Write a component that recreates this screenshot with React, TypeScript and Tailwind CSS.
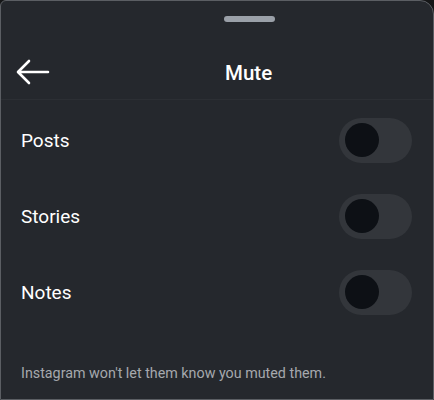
import React from "react";

const rows = ["Posts", "Stories", "Notes"];

function Toggle() {
  return (
    <div className="flex h-[45px] w-[73px] items-center rounded-full bg-[#33363b] pl-[6px]">
      <div className="h-[34px] w-[34px] rounded-full bg-[#0d1015]" />
    </div>
  );
}

export default function App() {
  return (
    <div className="h-[400px] w-[434px] bg-[#151617]" style={{ fontFamily: "Roboto, 'Liberation Sans', sans-serif" }}>
      <div className="flex h-[400px] w-[434px] flex-col rounded-tl-[6px] rounded-tr-[14px] border border-[#5b5e63] bg-[#25282d] text-white">
        {/* drag handle */}
        <div className="pt-[15px]">
          <div className="ml-[223px] h-[6px] w-[51px] rounded-full bg-[#9aa0a8]" />
        </div>

        {/* header */}
        <div className="relative flex h-[78px] items-center border-b border-[#2c2f34]">
          <svg className="absolute left-[15px] top-[37px]" width="34" height="26" viewBox="0 0 34 26" fill="none">
            <path d="M32 13H3M13 2L2 13l11 11" stroke="white" strokeWidth="2.6" strokeLinecap="round" strokeLinejoin="round" />
          </svg>
          <div className="ml-[224px] mt-[25px] text-[20.5px] font-medium leading-none">Mute</div>
        </div>

        {/* options */}
        <div className="pt-[2px]">
          {rows.map((r) => (
            <div key={r} className="flex h-[76px] items-center justify-between pl-[20px] pr-[21px]">
              <span className="text-[19px] leading-none">{r}</span>
              <Toggle />
            </div>
          ))}
        </div>

        <div className="mt-[36px] pl-[20px] text-[14.3px] leading-none text-[#a6a9ae]">
          Instagram won't let them know you muted them.
        </div>
      </div>
    </div>
  );
}
